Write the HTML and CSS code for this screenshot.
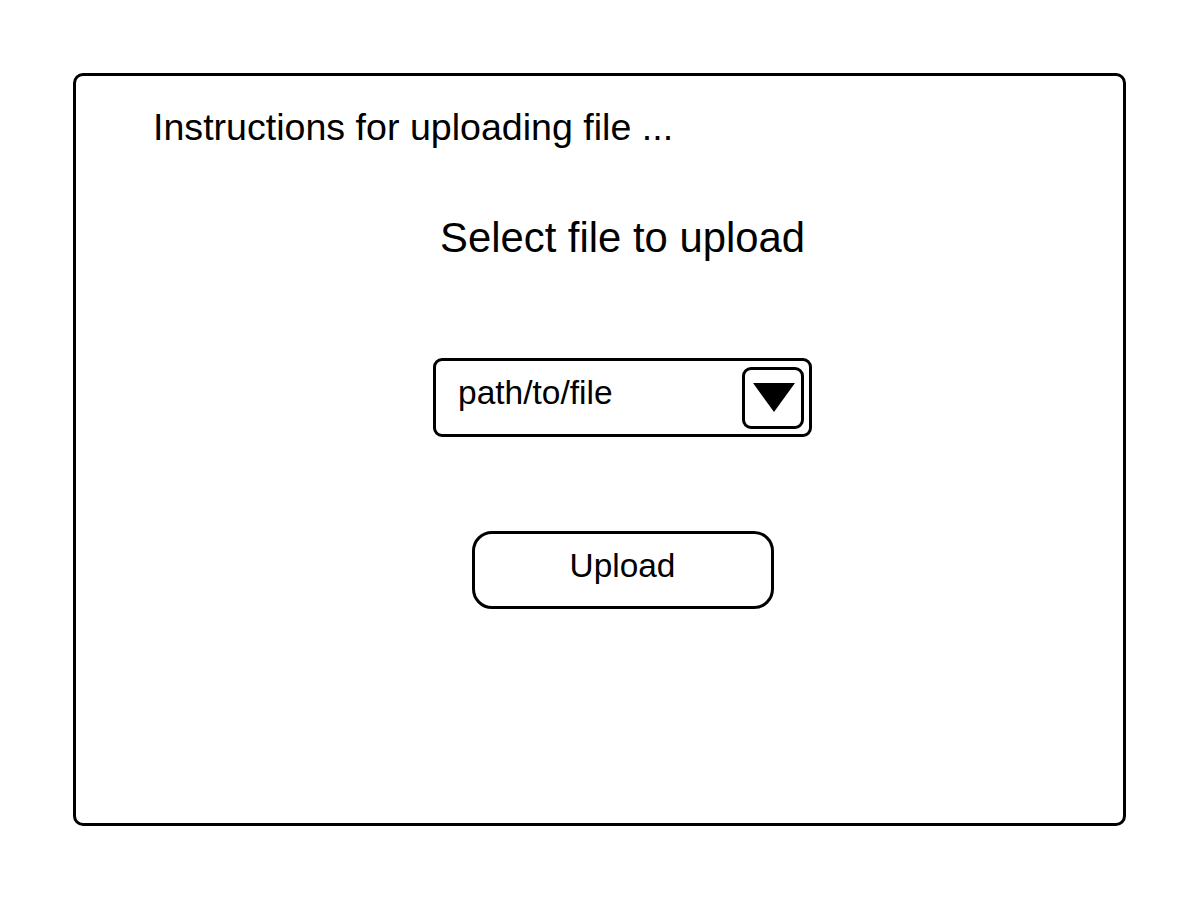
FILE: index.html
```html
<!DOCTYPE html>
<html lang="en">
<head>
<meta charset="utf-8">
<title>Upload file</title>
<link rel="stylesheet" href="styles.css">
</head>
<body>
  <main class="frame">
    <p class="instructions">Instructions for uploading file ...</p>
    <h1 class="title">Select file to upload</h1>
    <div class="picker">
      <span class="picker-label">path/to/file</span>
      <span class="picker-button" aria-hidden="true">
        <svg class="picker-arrow" width="42" height="29" viewBox="0 0 42 29"><path d="M0 0 H42 L21 29 Z" fill="#000"/></svg>
      </span>
    </div>
    <button class="upload" type="button">Upload</button>
  </main>
</body>
</html>
```

FILE: styles.css
```css
* { box-sizing: border-box; }

html, body {
  margin: 0;
  padding: 0;
  background: #fff;
}

body {
  font-family: "Liberation Sans", Arial, sans-serif;
  color: #000;
  padding: 73px 0 0 73px;
}

.frame {
  width: 1053px;
  height: 753px;
  border: 3px solid #000;
  border-radius: 10px;
  background: #fff;
  display: flex;
  flex-direction: column;
  align-items: center;
  padding: 30px 0 0 46px;
}

.instructions {
  align-self: flex-start;
  margin: 0 0 0 31px;
  font-size: 37.6px;
  line-height: 42px;
  font-weight: normal;
}

.title {
  margin: 66px 0 0 0;
  font-size: 41.8px;
  line-height: 48px;
  font-weight: normal;
}

.picker {
  margin-top: 96px;
  width: 379px;
  height: 79px;
  border: 3px solid #000;
  border-radius: 9px;
  display: flex;
  align-items: center;
  justify-content: space-between;
  padding: 0 5px 0 22px;
}

.picker-label {
  font-size: 33.5px;
  line-height: 38px;
  margin-bottom: 10px;
}

.picker-button {
  width: 62px;
  height: 62px;
  border: 3px solid #000;
  border-radius: 9px;
  display: flex;
  align-items: center;
  justify-content: center;
}

.picker-arrow {
  display: block;
  margin-left: 1px;
}

.upload {
  margin-top: 94px;
  width: 302px;
  height: 78px;
  border: 3px solid #000;
  border-radius: 20px;
  background: #fff;
  color: #000;
  font-family: "Liberation Sans", Arial, sans-serif;
  font-size: 33.4px;
  line-height: 63px;
  padding: 0 0 9px 0;
  text-align: center;
}
```
